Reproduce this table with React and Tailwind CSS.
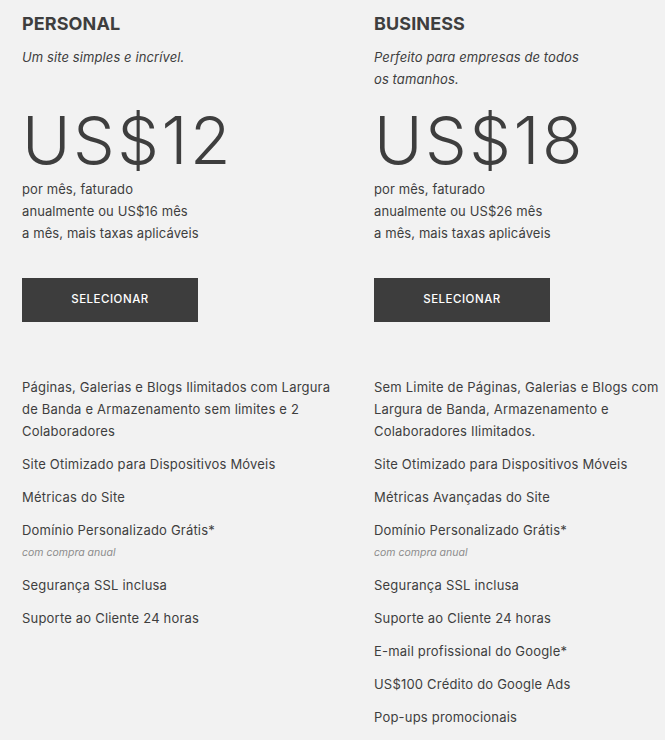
import React from 'react';

const plans = [
  {
    name: 'PERSONAL',
    tagline: 'Um site simples e incrível.',
    price: 'US$12',
    monthly: 'US$16',
    features: [
      { text: 'Páginas, Galerias e Blogs Ilimitados com Largura de Banda e Armazenamento sem limites e 2 Colaboradores' },
      { text: 'Site Otimizado para Dispositivos Móveis' },
      { text: 'Métricas do Site' },
      { text: 'Domínio Personalizado Grátis*', note: 'com compra anual' },
      { text: 'Segurança SSL inclusa' },
      { text: 'Suporte ao Cliente 24 horas' },
    ],
  },
  {
    name: 'BUSINESS',
    tagline: 'Perfeito para empresas de todos os tamanhos.',
    price: 'US$18',
    monthly: 'US$26',
    features: [
      { text: 'Sem Limite de Páginas, Galerias e Blogs com Largura de Banda, Armazenamento e Colaboradores Ilimitados.' },
      { text: 'Site Otimizado para Dispositivos Móveis' },
      { text: 'Métricas Avançadas do Site' },
      { text: 'Domínio Personalizado Grátis*', note: 'com compra anual' },
      { text: 'Segurança SSL inclusa' },
      { text: 'Suporte ao Cliente 24 horas' },
      { text: 'E-mail profissional do Google*' },
      { text: 'US$100 Crédito do Google Ads' },
      { text: 'Pop-ups promocionais' },
    ],
  },
];

function PlanColumn({ plan }) {
  return (
    <div className="w-[320px] shrink-0 flex flex-col">
      <h2 className="text-[18px] leading-[24px] font-bold tracking-[0.1px]">{plan.name}</h2>
      <p className="mt-[10px] min-h-[44px] max-w-[220px] text-[13px] leading-[22px] italic tracking-[0.1px]">
        {plan.tagline}
      </p>

      <div className="mt-[12px] text-[66px] leading-[76px] font-light tracking-[2.5px]">{plan.price}</div>
      <p className="text-[13px] leading-[22px] tracking-[0.1px]">
        por mês, faturado<br />
        anualmente ou {plan.monthly} mês<br />
        a mês, mais taxas aplicáveis
      </p>

      <button className="mt-[34px] w-[176px] h-[44px] bg-[#3d3d3d] text-white text-[11.5px] font-medium tracking-[0.5px]">
        SELECIONAR
      </button>

      {/* Features */}
      <ul className="mt-[54px] flex flex-col gap-[11px] text-[13px] leading-[22px] tracking-[0.2px]">
        {plan.features.map((f) => (
          <li key={f.text}>
            <div>{f.text}</div>
            {f.note && (
              <div className="pt-[1px] text-[10.5px] leading-[21px] italic tracking-normal text-[#8c8c8c]">{f.note}</div>
            )}
          </li>
        ))}
      </ul>
    </div>
  );
}

export default function App() {
  return (
    <div
      className="w-full min-h-screen overflow-hidden bg-[#f2f2f2] text-[#3e3e3e]"
      style={{ fontFamily: 'Inter, "Open Sans", sans-serif' }}
    >
      <div className="flex gap-[32px] pl-[22px] pt-[12px] pb-10">
        {plans.map((p) => (
          <PlanColumn key={p.name} plan={p} />
        ))}
      </div>
    </div>
  );
}
